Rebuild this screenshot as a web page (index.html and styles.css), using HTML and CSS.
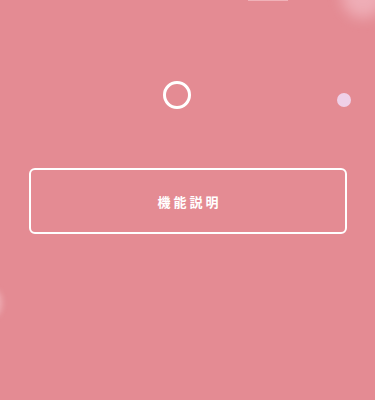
FILE: index.html
```html
<!DOCTYPE html>
<html lang="ja">
<head>
<meta charset="utf-8">
<link rel="stylesheet" href="styles.css">
</head>
<body>
<div class="page">
  <span class="deco deco-line"></span>
  <span class="deco deco-glow-top"></span>
  <span class="deco deco-glow-left"></span>
  <span class="deco deco-dot"></span>
  <main class="content">
    <div class="loader"></div>
    <button class="feature-btn">機能説明</button>
  </main>
</div>
</body>
</html>
```
FILE: styles.css
```css
html, body {
  margin: 0;
  padding: 0;
}
body {
  background: #e48b93;
  font-family: "Noto Sans CJK JP", "Noto Sans", sans-serif;
}
.page {
  position: relative;
  width: 375px;
  height: 400px;
  overflow: hidden;
  background: #e48b93;
}
.content {
  display: flex;
  flex-direction: column;
  align-items: center;
  padding-top: 81px;
}
.loader {
  width: 22px;
  height: 22px;
  border: 3px solid #ffffff;
  border-radius: 50%;
  margin-left: -21px;
}
.feature-btn {
  margin-top: 59px;
  margin-left: 1px;
  width: 318px;
  height: 66px;
  box-sizing: border-box;
  border: 2px solid #ffffff;
  border-radius: 6px;
  background: transparent;
  color: #ffffff;
  font-family: "Noto Sans CJK JP", "Noto Sans", sans-serif;
  font-weight: 700;
  font-size: 13px;
  letter-spacing: 3px;
  padding: 0 0 0 3px;
  line-height: 1;
}
.deco {
  position: absolute;
  display: block;
}
.deco-line {
  left: 248px;
  top: 0;
  width: 40px;
  height: 1px;
  background: rgba(255, 225, 230, 0.45);
}
.deco-glow-top {
  left: 342px;
  top: -24px;
  width: 42px;
  height: 42px;
  border-radius: 50%;
  background: rgba(255, 225, 235, 0.4);
  filter: blur(7px);
}
.deco-glow-left {
  left: -14px;
  top: 290px;
  width: 16px;
  height: 26px;
  border-radius: 50%;
  background: rgba(255, 225, 230, 0.4);
  filter: blur(3px);
}
.deco-dot {
  left: 337px;
  top: 93px;
  width: 14px;
  height: 14px;
  border-radius: 50%;
  background: #efd0e8;
}
```
